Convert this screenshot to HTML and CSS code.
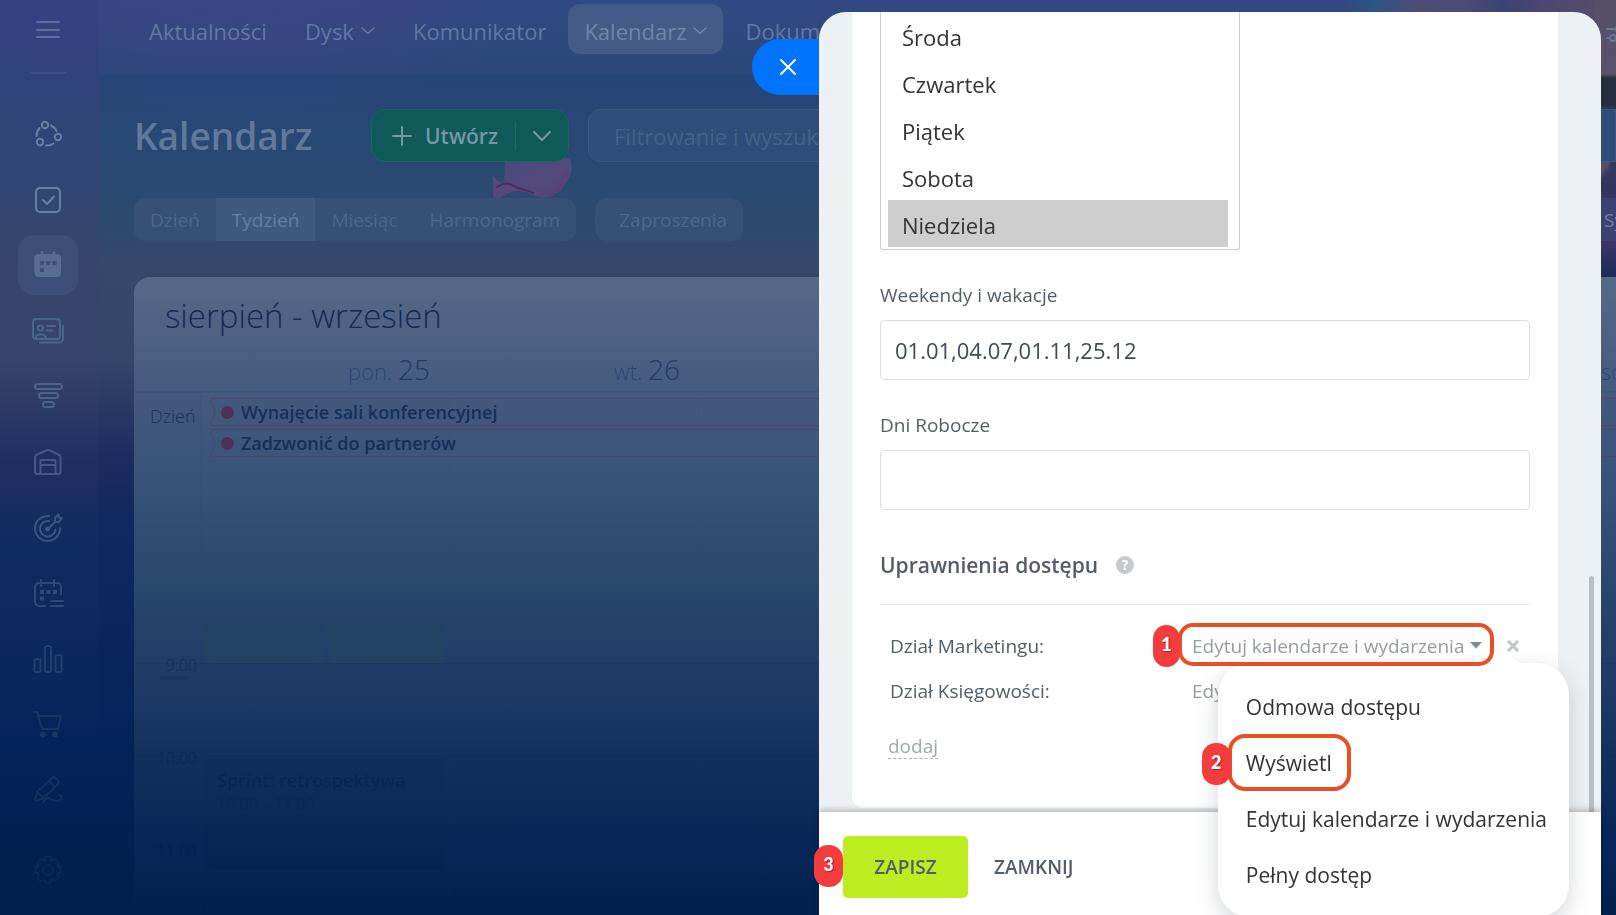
FILE: index.html
```html
<!DOCTYPE html>
<html lang="pl">
  <head>
    <meta charset="UTF-8" />
    <meta name="viewport" content="width=device-width, initial-scale=1.0" />
    <title>Kalendarz</title>
    <link rel="stylesheet" href="styles.css">
  </head>
  <body>
    <div class="page">
      <!-- menu boczne -->
      <aside class="sidebar">
        <button class="side-btn side-burger" aria-label="Menu">
          <svg width="26" height="20" viewBox="0 0 26 20"><path d="M2 2h22M2 10h22M2 17h22" /></svg>
        </button>
        <hr class="side-line">
        <nav class="side-nav">
          <a class="side-btn" href="#" aria-label="Zespół">
            <svg width="32" height="32" viewBox="0 0 32 32"><circle cx="13" cy="7" r="3.2" /><circle cx="26" cy="19" r="3.2" /><circle cx="8" cy="24" r="3.2" /><path d="M19 7.500a11 11 0 0 1 5.500 5.500M21.500 25.500a11 11 0 0 1-7.500 2M4.500 18a12 12 0 0 1 3-8" /></svg>
          </a>
          <a class="side-btn" href="#" aria-label="Zadania">
            <svg width="32" height="32" viewBox="0 0 32 32"><rect x="4" y="4" width="24" height="24" rx="4" /><path d="M11 16l4 4 7-7.500" /></svg>
          </a>
          <a class="side-btn active" href="#" aria-label="Kalendarz">
            <svg class="solid" width="32" height="32" viewBox="0 0 32 32"><path fill-rule="evenodd" d="M8.500 3a1.500 1.500 0 0 1 3 1v1h9V4a1.500 1.500 0 0 1 3 0v1h1.500a4 4 0 0 1 4 4v15a4 4 0 0 1-4 4H6.500a4 4 0 0 1-4-4V9a4 4 0 0 1 4-4H8.500zM8 12v4h4v-4zM14.300 12v4h4v-4zM20.500 12v4h4v-4zM8 19v4h4v-4z" /></svg>
          </a>
          <a class="side-btn" href="#" aria-label="CRM">
            <svg width="34" height="32" viewBox="0 0 34 32"><rect x="2" y="4" width="27" height="20" rx="3" /><circle cx="9.500" cy="13" r="2.600" /><path d="M4.500 23c1-5 9-5 10.500 0M16 11h8M16 15.500h5M9 27.500h19a4 4 0 0 0 4-4V11" /></svg>
          </a>
          <a class="side-btn" href="#" aria-label="Lejek">
            <svg width="32" height="32" viewBox="0 0 32 32"><rect x="3" y="4" width="27" height="5" rx="2.500" /><rect x="7" y="13" width="19" height="5" rx="2.500" /><rect x="11" y="22" width="11" height="5" rx="2.500" /></svg>
          </a>
          <a class="side-btn" href="#" aria-label="Magazyn">
            <svg width="32" height="32" viewBox="0 0 32 32"><path d="M5 28a2 2 0 0 1-2-2V11a3 3 0 0 1 2-2.500l9-4a5 5 0 0 1 4 0l8.500 4a3 3 0 0 1 2 2.500v15a2 2 0 0 1-2 2zM8.500 28V14h15v14M8.500 19h15" /></svg>
          </a>
          <a class="side-btn" href="#" aria-label="Marketing">
            <svg width="32" height="32" viewBox="0 0 32 32"><path d="M17 4A12.500 12.500 0 1 0 28 16M17 9a7.800 7.800 0 1 0 6.500 8.500M16 17l7-7M23 10V6l3.500-3.500.5 3 3 .5L27 10z" /><circle class="dot" cx="15.500" cy="17" r="2.500" /></svg>
          </a>
          <a class="side-btn" href="#" aria-label="Rezerwacje">
            <svg width="34" height="32" viewBox="0 0 34 32"><path d="M14 29H8a4 4 0 0 1-4-4V10a4 4 0 0 1 4-4h18a4 4 0 0 1 4 4v7M10 3v6M23 3v6M20 24h12M20 29h12" /><path class="dot" d="M9 13h4v4H9zM15.500 13h4v4h-4zM22 13h4v4h-4zM9 19.500h4v4H9z" /></svg>
          </a>
          <a class="side-btn" href="#" aria-label="Analityka">
            <svg width="32" height="32" viewBox="0 0 32 32"><rect x="2.500" y="16" width="6" height="13" rx="2" /><rect x="13" y="3" width="6" height="26" rx="2" /><rect x="23.500" y="12" width="6" height="17" rx="2" /></svg>
          </a>
          <a class="side-btn" href="#" aria-label="Sklepy">
            <svg width="32" height="32" viewBox="0 0 32 32"><path d="M2 4h3l5 17h16l3-13H6.500" /><circle class="dot" cx="11" cy="26.500" r="3" /><circle class="dot" cx="23" cy="26.500" r="3" /></svg>
          </a>
          <a class="side-btn" href="#" aria-label="Podpis">
            <svg width="32" height="32" viewBox="0 0 32 32"><path d="M3 27l2-9L20 4a2.500 2.500 0 0 1 3.500 0l2.500 2.500a2.500 2.500 0 0 1 0 3.500L12 24zM17 7l6 6M5 18l7 6M11 28c3-2 3-4 5-4s3 3 8 3 7-3 4-6" /></svg>
          </a>
        </nav>
        <a class="side-btn" href="#" aria-label="Ustawienia">
          <svg width="32" height="32" viewBox="0 0 32 32"><path d="M13.500 3h5l1 3.500 3.500-1.500 3.500 3.500-1.500 3.500 3.500 1.500v5l-3.500 1.500 1.500 3.500-3.500 3.500-3.500-1.500-1 3.500h-5l-1-3.500L9 27.500 5.500 24 7 20l-3.500-1.500v-5L7 12 5.500 8.500 9 5l3.500 1.500z" /><circle cx="16" cy="16" r="5" /></svg>
        </a>
      </aside>

      <div class="main">
        <nav class="topnav">
          <a href="#">Aktualności</a>
          <a href="#">Dysk <svg class="chev" width="14" height="8" viewBox="0 0 14 8"><path d="M1 1l6 5.500L13 1" /></svg></a>
          <a href="#">Komunikator</a>
          <a class="current" href="#">Kalendarz <svg class="chev" width="14" height="8" viewBox="0 0 14 8"><path d="M1 1l6 5.500L13 1" /></svg></a>
          <a href="#">Dokumenty</a>
          <button class="nav-settings" aria-label="Konfiguruj menu">
            <svg width="26" height="20" viewBox="0 0 26 20"><path d="M1 5h9M16 5h8M1 14h3M10 14h14" /><circle cx="13" cy="5" r="3" /><circle cx="7" cy="14" r="3" /></svg>
          </button>
        </nav>

        <header class="toolbar">
          <h1>Kalendarz</h1>
          <div class="create">
            <button class="create-main">
              <svg width="20" height="20" viewBox="0 0 20 20"><path d="M10 1v18M1 10h18" /></svg>
              Utwórz
            </button>
            <button class="create-more" aria-label="Więcej">
              <svg width="18" height="10" viewBox="0 0 18 10"><path d="M1 1l8 8 8-8" /></svg>
            </button>
          </div>
          <input class="search" type="text" aria-label="Filtrowanie" placeholder="Filtrowanie i wyszukiwanie" />
        </header>

        <svg class="petal" width="84" height="54" viewBox="0 0 84 54">
          <defs>
            <linearGradient id="petalFill" x1="0" y1="0" x2="1" y2="1">
              <stop offset="0" stop-color="#454a7a" />
              <stop offset="0.600" stop-color="#534a7e" />
              <stop offset="1" stop-color="#5d3b70" />
            </linearGradient>
            <linearGradient id="petalTip" x1="0" y1="0" x2="0" y2="1">
              <stop offset="0" stop-color="#5a4a7c" />
              <stop offset="0.600" stop-color="#5a4578" />
              <stop offset="1" stop-color="#3a4c74" />
            </linearGradient>
          </defs>
          <path fill="url(#petalFill)" d="M14 4C22-2 70-3 79 2c6 14-6 32-20 38-9 2-16-2-24-5-7-2-14-6-22-7z" />
          <path fill="url(#petalTip)" d="M1 18c4 5 8 7 13 9 10 0 16 4 28 9-16-4-30-3-38 14C0 40 4 28 1 18z" />
          <path class="petal-fold" d="M6 30c8-6 14-3 21 1 6 2 10 2 15 5" />
        </svg>

        <div class="filters">
          <div class="tabs">
            <button>Dzień</button>
            <button class="on">Tydzień</button>
            <button>Miesiąc</button>
            <button>Harmonogram</button>
          </div>
          <button class="pill">Zaproszenia</button>
          <button class="pill sync">Synchronizacja</button>
        </div>

        <section class="board">
          <h2>sierpień - wrzesień</h2>
          <div class="days">
            <span></span>
            <span class="day">pon. <b>25</b></span>
            <span class="day">wt. <b>26</b></span>
            <span></span>
            <span></span>
            <span></span>
            <span class="day">sob. <b>30</b></span>
          </div>
          <div class="board-body">
            <div class="allday">
              <span class="allday-label">Dzień</span>
              <div class="allday-list">
                <a class="long-event" href="#">
                  <svg width="10" height="28" viewBox="0 0 10 28"><path d="M10 .5H2C-1 1 5 11 5 14S-1 27 2 27.500h8" /></svg>
                  <span class="long-text"><i></i>Wynajęcie sali konferencyjnej</span>
                </a>
                <a class="long-event" href="#">
                  <svg width="10" height="28" viewBox="0 0 10 28"><path d="M10 .5H2C-1 1 5 11 5 14S-1 27 2 27.500h8" /></svg>
                  <span class="long-text"><i></i>Zadzwonić do partnerów</span>
                </a>
              </div>
            </div>
            <div class="hour first">
              <span></span>
              <div class="slot"><i class="green"></i><i class="green"></i></div>
            </div>
            <div class="hour">
              <span class="time">9:00<i class="now"></i></span>
            </div>
            <div class="hour">
              <span class="time">10:00</span>
              <div class="slot">
                <a class="event" href="#"><b>Sprint: retrospektywa</b><small>10:00 – 11:00</small></a>
              </div>
            </div>
            <div class="hour last">
              <span class="time">11:00</span>
            </div>
          </div>
        </section>
      </div>
    </div>

    <!-- panel ustawień -->
    <div class="slider">
      <button class="slider-close" aria-label="Zamknij panel">
        <svg width="16" height="16" viewBox="0 0 16 16"><path d="M1 1l14 14M15 1L1 15" /></svg>
      </button>

      <div class="slider-body">
        <form class="sheet" id="settings">
          <select class="weekdays" multiple size="5" aria-label="Dni wolne">
            <option>Środa</option>
            <option>Czwartek</option>
            <option>Piątek</option>
            <option>Sobota</option>
            <option selected>Niedziela</option>
          </select>

          <label class="field-label" for="holidays">Weekendy i wakacje</label>
          <input class="field" type="text" id="holidays" value="01.01,04.07,01.11,25.12" />

          <label class="field-label" for="workdays">Dni Robocze</label>
          <input class="field" type="text" id="workdays" />

          <h3>Uprawnienia dostępu <span class="hint">?</span></h3>

          <div class="access">
            <span>Dział Marketingu:</span>
            <div class="access-cell">
              <button type="button" class="access-btn marked">
                Edytuj kalendarze i wydarzenia
                <svg width="12" height="7" viewBox="0 0 12 7"><path d="M0 0h12L6 6.500z" /></svg>
                <span class="badge">1</span>
              </button>
              <button type="button" class="remove" aria-label="Usuń">
                <svg width="12" height="12" viewBox="0 0 12 12"><path d="M1 1l10 10M11 1L1 11" /></svg>
              </button>

              <div class="menu">
                <button type="button">Odmowa dostępu</button>
                <button type="button"><span class="marked">Wyświetl<span class="badge">2</span></span></button>
                <button type="button">Edytuj kalendarze i wydarzenia</button>
                <button type="button">Pełny dostęp</button>
              </div>
            </div>
          </div>
          <div class="access">
            <span>Dział Księgowości:</span>
            <div class="access-cell">
              <button type="button" class="access-btn">Edytuj kalendarze i wydarzenia</button>
            </div>
          </div>
          <a class="add" href="#">dodaj</a>
        </form>
        <div class="scrollbar"></div>
      </div>

      <footer class="slider-footer">
        <button class="save" type="submit" form="settings">ZAPISZ<span class="badge">3</span></button>
        <button class="cancel" type="button">ZAMKNIJ</button>
      </footer>
    </div>
  </body>
</html>
```

FILE: styles.css
```css
* {
  box-sizing: border-box;
}
body {
  margin: 0;
  height: 100vh;
  overflow: hidden;
  font-family: 'Open Sans', 'Noto Sans', sans-serif;
  background-color: #02204d;
}
button,
input,
select {
  font-family: inherit;
  margin: 0;
}
button {
  border: none;
  background: none;
  padding: 0;
}
a {
  color: inherit;
  text-decoration: none;
}
svg {
  display: block;
  flex: none;
  fill: none;
  stroke: currentColor;
  stroke-width: 2;
  stroke-linecap: round;
  stroke-linejoin: round;
}

/* dimmed page */
.page {
  display: flex;
  height: 100vh;
  overflow: hidden;
  background:
    radial-gradient(ellipse 14px 28px at calc(100% - 17px) 152px, #5b4d66 70%, transparent 100%),
    linear-gradient(to bottom, #5a4e68 0, #5c5168 74px, #262d3c 78px, #262d3c 104px, #2b3f66 112px, #34355f 190px, #3c3566 240px, #1c2a58 277px) right / 22px 277px no-repeat,
    linear-gradient(to right, transparent 0, #2a5288 10%, #4e4a73 26%, #4c4873 44%, #373f72 58%, #50436e 75%, #5a4e68 100%) right top / 270px 24px no-repeat,
    radial-gradient(ellipse 300px 110px at 240px 0, rgba(62, 62, 134, 0.7), transparent),
    linear-gradient(to bottom, #2c4684 0, #264577 80px, #2a4a72 190px, #35486a 270px, #34456a 360px, #1c2b60 460px, #0e285e 540px, #0d265c 620px, #04225a 740px, #02204f 860px, #02204d 100%);
  background-position: 0 0, right top, right top, 0 0, 0 0;
}
.sidebar {
  width: 99px;
  flex: none;
  display: flex;
  flex-direction: column;
  align-items: center;
  padding: 0 7px 15px 3px;
  background: linear-gradient(to bottom, rgba(62, 62, 128, 0.35), rgba(62, 62, 110, 0.25) 40%, rgba(30, 60, 110, 0.15) 60%, transparent 85%);
}
.side-btn {
  width: 60px;
  height: 60px;
  display: flex;
  align-items: center;
  justify-content: center;
  border-radius: 16px;
  color: #6980a5;
}
.side-burger {
  color: #58729f;
}
.side-line {
  width: 38px;
  height: 2px;
  margin: 12px 0 30px;
  border: none;
  background: #3b5080;
}
.side-nav {
  flex: 1;
  display: flex;
  flex-direction: column;
  justify-content: space-between;
  margin-bottom: 20px;
}
.side-btn.active {
  background: #3d4f78;
  color: #566c91;
}
.side-btn .dot,
.side-btn .solid {
  fill: currentColor;
  stroke: none;
}
.side-nav .side-btn:nth-child(4) {
  color: #4b658c;
}
.side-nav .side-btn:nth-child(5) {
  color: #496389;
}
.side-nav .side-btn:nth-child(6) {
  color: #405a85;
}
.side-nav .side-btn:nth-child(7) {
  color: #3a557f;
}
.side-nav .side-btn:nth-child(8) {
  color: #2d4975;
}
.side-nav .side-btn:nth-child(9) {
  color: #233f6d;
}
.side-nav .side-btn:nth-child(10) {
  color: #193663;
}
.side-nav .side-btn:nth-child(11) {
  color: #14315f;
}
.sidebar > a.side-btn {
  color: #082857;
}

.main {
  flex: 1;
  min-width: 0;
  display: flex;
  flex-direction: column;
  position: relative;
  overflow: hidden;
}
.topnav {
  height: 75px;
  flex: none;
  display: flex;
  align-items: flex-start;
  gap: 6px;
  padding: 4px 0 0 34px;
  background: rgba(70, 90, 130, 0.18);
  color: #5f79a4;
  font-size: 22px;
}
.topnav a {
  height: 50px;
  display: flex;
  align-items: center;
  gap: 7px;
  padding: 3px 16px 0;
  border-radius: 12px;
}
.topnav a.current {
  background: #445b88;
  color: #6f86a8;
}
.topnav .chev {
  stroke-width: 1.5;
}
.nav-settings {
  margin: 20px -16px 0 auto;
  color: #6c7593;
}

.toolbar {
  display: flex;
  align-items: center;
  margin: 34px 0 0 35px;
}
h1 {
  width: 237px;
  margin: 0;
  color: #61799c;
  font-size: 37px;
  line-height: 52px;
  font-weight: 600;
}
.create {
  display: flex;
  width: 198px;
  height: 53px;
  flex: none;
  border: 1px solid #176463;
  border-radius: 14px;
  background: #0f595b;
  color: #7697a6;
}
.create-main {
  flex: 1;
  display: flex;
  align-items: center;
  gap: 13px;
  padding-left: 20px;
  color: inherit;
  font-size: 21px;
  font-weight: 600;
}
.create-more {
  width: 53px;
  display: flex;
  align-items: center;
  justify-content: center;
  color: inherit;
  background: linear-gradient(#1f6467, #1f6467) left center / 1px 28px no-repeat;
}
.search {
  flex: 1;
  height: 53px;
  margin-left: 19px;
  padding: 0 25px;
  border: 1px solid #395781;
  border-radius: 12px 0 0 12px;
  background: #2e4d78;
  color: #456288;
  font-size: 22px;
}
.search::placeholder {
  color: #456288;
  opacity: 1;
}
.petal {
  position: absolute;
  left: 392px;
  top: 157px;
  stroke: none;
  z-index: 0;
}
.petal-fold {
  stroke: #4d2a61;
  stroke-width: 2;
}
.toolbar,
.filters {
  position: relative;
  z-index: 1;
}

.filters {
  display: flex;
  gap: 19px;
  margin: 36px 0 0 35px;
}
.filters button {
  height: 43px;
  padding: 0 16px;
  color: #4d678c;
  font-size: 19px;
}
.tabs {
  display: flex;
  border-radius: 12px;
  overflow: hidden;
  background: #365175;
}
.tabs .on {
  background: #3f5a7e;
  color: #657e9f;
}
.filters .pill {
  padding: 0 16px 0 24px;
  border-radius: 12px;
  background: #365175;
}
.filters .sync {
  margin: 0 -136px 0 auto;
  background: #3b4270;
  color: #747f9d;
}

.board {
  flex: 1;
  display: flex;
  flex-direction: column;
  min-height: 0;
  margin: 36px 0 0 35px;
  border-radius: 16px 0 0 0;
  overflow: hidden;
  background: linear-gradient(to bottom, #556987 0, #485e81 90px, #42597d 125px, #375177 220px, #29466d 310px, #203b66 400px, #13305d 480px, #072557 570px, #02204d 100%);
}
h2 {
  margin: 0;
  padding: 14px 0 0 31px;
  color: #132a53;
  font-size: 33px;
  line-height: 50px;
  font-weight: 300;
}
.days {
  display: grid;
  grid-template-columns: 67px repeat(6, 250px);
  height: 52px;
  border-bottom: 2px solid #3d5679;
}
.day {
  padding-right: 21px;
  text-align: right;
  color: #284770;
  font-size: 22px;
  line-height: 56px;
  font-weight: 300;
}
.day b {
  font-size: 28px;
  font-weight: 300;
  color: #1d3b67;
}
.board-body {
  flex: 1;
  display: flex;
  flex-direction: column;
  background: repeating-linear-gradient(to right, rgba(30, 55, 100, 0.07) 0, rgba(30, 55, 100, 0.07) 1px, transparent 1px, transparent 249px) 66px 0 no-repeat;
}
.allday {
  display: flex;
  height: 231px;
  padding-top: 5px;
}
.allday-label {
  width: 76px;
  flex: none;
  padding: 5px 0 0 16px;
  color: #16315a;
  font-size: 18px;
  line-height: 26px;
  font-weight: 300;
}
.allday-list {
  flex: 1;
  display: flex;
  flex-direction: column;
  gap: 3px;
}
.long-event {
  display: flex;
  height: 28px;
}
.long-event svg {
  stroke: #524668;
  stroke-width: 1;
}
.long-text {
  flex: 1;
  display: flex;
  align-items: center;
  gap: 7px;
  border-top: 1px solid #4f466b;
  border-bottom: 1px solid #4f466b;
  color: #162f59;
  font-size: 18px;
  font-weight: 600;
}
.long-text i {
  width: 13px;
  height: 13px;
  margin-left: 1px;
  border-radius: 50%;
  background: #4b3158;
}
.hour {
  display: grid;
  grid-template-columns: 67px 248px;
  height: 93px;
  border-top: 1px solid rgba(10, 35, 80, 0.15);
}
.hour.first {
  height: 39px;
  border: none;
}
.hour.last {
  flex: 1;
  height: auto;
}
.slot {
  display: flex;
  gap: 5px;
  padding: 0 4px;
}
.green {
  flex: 1;
  border-radius: 0 0 5px 5px;
  background: #234162;
}
.time {
  margin-top: -10px;
  padding-right: 4px;
  text-align: right;
  color: #132d59;
  font-size: 16px;
  line-height: 22px;
  font-weight: 300;
}
.hour:nth-child(4) .time {
  color: #0a2654;
}
.hour:nth-child(5) .time {
  color: #031f4c;
}
.now {
  display: block;
  width: 28px;
  height: 4px;
  margin-left: 26px;
  background: #193560;
}
.event {
  flex: 1;
  height: 110px;
  display: flex;
  flex-direction: column;
  margin-top: 2px;
  padding: 8px 12px;
  border-radius: 5px;
  background: linear-gradient(to bottom, #112e5a, rgba(3, 34, 80, 0.6));
  color: #092553;
}
.event b {
  font-size: 18px;
  line-height: 26px;
  font-weight: 600;
}
.event small {
  color: #0a2755;
  font-size: 16px;
  line-height: 22px;
}

/* settings panel */
.slider {
  position: fixed;
  top: 12px;
  right: 15px;
  bottom: 0;
  z-index: 10;
  width: calc(50vw - 26px);
  display: flex;
  flex-direction: column;
  border-radius: 27px 27px 0 0;
  background: #edf1f4;
}
.slider-close {
  position: absolute;
  left: -67px;
  top: 27px;
  width: 67px;
  height: 56px;
  display: flex;
  align-items: center;
  justify-content: center;
  padding-left: 5px;
  border-radius: 28px 0 0 28px;
  background: #0073ff;
  color: #fff;
}
.slider-body {
  flex: 1;
  min-height: 0;
  display: flex;
  align-items: flex-end;
  padding: 0 7px 4px 33px;
}
.sheet {
  flex: 1;
  display: flex;
  flex-direction: column;
  align-items: flex-start;
  height: 100%;
  justify-content: flex-end;
  margin-right: 31px;
  padding: 0 28px;
  border-radius: 0 0 12px 12px;
  background: #fff;
}
.scrollbar {
  width: 5px;
  height: 236px;
  margin-bottom: -4px;
  border-radius: 3px 3px 0 0;
  background: #b9bfc3;
}
.weekdays {
  width: 360px;
  height: 238px;
  flex: none;
  padding: 0 11px 2px 7px;
  border: 1px solid #c6cdd3;
  border-top: none;
  border-radius: 0 0 3px 3px;
  outline: none;
  overflow: hidden;
  background: #fff;
  color: #333;
  font-size: 22px;
}
.weekdays option {
  height: 47px;
  padding: 10px 14px 7px;
  line-height: 30px;
  color: #333;
}
.weekdays option:checked {
  background: #cecece linear-gradient(#cecece, #cecece);
}
.field-label {
  margin: 32px 0 12px;
  color: #535c69;
  font-size: 19px;
  line-height: 26px;
}
.field {
  width: 100%;
  height: 60px;
  flex: none;
  padding: 0 14px;
  border: 1px solid #dcdfe2;
  border-radius: 4px;
  background: #fff;
  color: #424956;
  font-size: 22px;
}
h3 {
  display: flex;
  align-items: center;
  gap: 18px;
  width: 100%;
  height: 79px;
  margin: 16px 0 18px;
  border-bottom: 1px solid #e8eaec;
  color: #535c69;
  font-size: 21px;
  font-weight: 600;
}
.hint {
  width: 18px;
  height: 18px;
  border-radius: 50%;
  background: #c6cacf;
  color: #fff;
  font-size: 14px;
  line-height: 18px;
  font-weight: 700;
  text-align: center;
}
.access {
  display: grid;
  grid-template-columns: 302px 1fr;
  align-items: center;
  width: 100%;
  height: 45px;
  padding-left: 10px;
  color: #535c69;
  font-size: 19px;
}
.access-cell {
  position: relative;
  display: flex;
  align-items: center;
  justify-content: space-between;
  padding-right: 11px;
}
.access-btn {
  display: flex;
  align-items: center;
  gap: 6px;
  color: #959ca4;
  font-size: 19px;
  line-height: 26px;
}
.access-btn.marked {
  z-index: 6;
}
.access-btn svg,
.access-btn path {
  fill: #828b95;
  stroke: none;
}
.remove {
  color: #c0c5ca;
}
.remove svg {
  stroke-width: 3;
  stroke-linecap: butt;
}
.add {
  margin: 21px 0 49px 8px;
  border-bottom: 1px dashed #a8adb4;
  color: #a0a6ae;
  font-size: 19px;
  line-height: 24px;
}

/* orange frame with a numbered badge */
.marked {
  position: relative;
}
.marked::before {
  content: '';
  position: absolute;
  inset: -10px -12px -7px -14px;
  border: 4px solid #e65024;
  border-radius: 15px;
}
.badge {
  position: absolute;
  left: -39px;
  top: -8px;
  width: 27px;
  height: 42px;
  border-radius: 14px;
  background: #f23c3d;
  color: #fff;
  font-family: Lato, sans-serif;
  font-size: 18px;
  line-height: 38px;
  font-weight: 900;
  text-align: center;
  text-shadow: 1px 1px 1px rgba(90, 0, 0, 0.5);
}

.menu {
  position: absolute;
  top: 30px;
  right: -39px;
  z-index: 5;
  display: flex;
  flex-direction: column;
  padding: 16px 22px 14px 28px;
  border-radius: 32px;
  background: #fff;
  box-shadow: 0 7px 21px rgba(83, 92, 105, 0.25);
}
.menu::before {
  content: '';
  position: absolute;
  top: -10px;
  right: 54px;
  width: 22px;
  height: 22px;
  background: #fff;
  transform: rotate(45deg);
}
.menu button {
  height: 56px;
  text-align: left;
  color: #333;
  font-size: 21px;
  white-space: nowrap;
}
.menu .marked::before {
  inset: -15px -19px -14px -18px;
  border-radius: 17px;
}
.menu .badge {
  left: -44px;
  top: -6px;
  width: 29px;
}

.slider-footer {
  position: relative;
  height: 103px;
  flex: none;
  display: flex;
  align-items: center;
  padding: 6px 24px 0;
  background: #fff;
  box-shadow: 0 -2px 6px rgba(0, 0, 0, 0.25);
}
.slider-footer button {
  position: relative;
  height: 62px;
  color: #535c69;
  font-size: 19px;
  font-weight: 600;
}
.save {
  width: 125px;
  border-radius: 5px;
  background: #bbed21;
}
.cancel {
  margin-left: 26px;
}
.save .badge {
  left: -29px;
  top: 9px;
  width: 29px;
}
```
